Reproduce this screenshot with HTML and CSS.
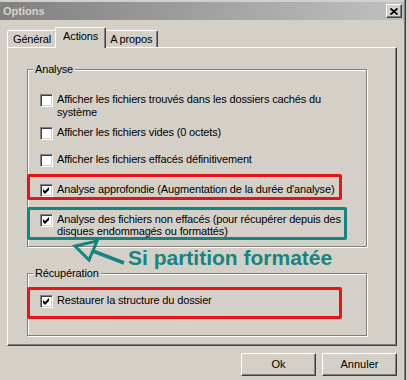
FILE: index.html
```html
<!DOCTYPE html>
<html lang="fr">
<head>
    <meta charset="UTF-8">
    <title>Options</title>
    <link rel="stylesheet" href="styles.css">
</head>
<body>
    <div class="window">
        <!-- Title bar -->
        <div class="titlebar">
            <span class="title">Options</span>
            <span class="close-btn">
                <svg width="8" height="7" viewBox="0 0 8 7"><path d="M0.5 0.5 L7.5 6.5 M7.5 0.5 L0.5 6.5" stroke="#000" stroke-width="1.8"/></svg>
            </span>
        </div>

        <div class="client">
            <!-- Tabs -->
            <div class="tabs">
                <div class="tab">Général</div>
                <div class="tab active">Actions</div>
                <div class="tab">A propos</div>
            </div>

            <div class="panel">
                <fieldset class="group group-analyse">
                    <legend>Analyse</legend>
                    <div class="option">
                        <span class="check"></span>
                        <span class="label">Afficher les fichiers trouvés dans les dossiers cachés du<br>système</span>
                    </div>
                    <div class="option">
                        <span class="check"></span>
                        <span class="label">Afficher les fichiers vides (0 octets)</span>
                    </div>
                    <div class="option spaced">
                        <span class="check"></span>
                        <span class="label">Afficher les fichiers effacés définitivement</span>
                    </div>
                    <div class="option marked marked-red">
                        <span class="check"><svg width="7" height="7" viewBox="0 0 7 7"><polygon points="0,2 2,4 6,0 6,3 2,7 0,5"/></svg></span>
                        <span class="label">Analyse approfondie (Augmentation de la durée d'analyse)</span>
                    </div>
                    <div class="option marked marked-teal">
                        <span class="check"><svg width="7" height="7" viewBox="0 0 7 7"><polygon points="0,2 2,4 6,0 6,3 2,7 0,5"/></svg></span>
                        <span class="label">Analyse des fichiers non effacés (pour récupérer depuis des<br>disques endommagés ou formattés)</span>
                    </div>
                </fieldset>

                <fieldset class="group group-recup">
                    <legend>Récupération</legend>
                    <div class="option marked marked-red">
                        <span class="check"><svg width="7" height="7" viewBox="0 0 7 7"><polygon points="0,2 2,4 6,0 6,3 2,7 0,5"/></svg></span>
                        <span class="label">Restaurer la structure du dossier</span>
                    </div>
                </fieldset>
            </div>

            <!-- Dialog buttons -->
            <div class="buttons">
                <button class="btn">Ok</button>
                <button class="btn">Annuler</button>
            </div>
        </div>

        <!-- Annotation drawn over the dialog -->
        <svg class="note-arrow" width="64" height="34" viewBox="0 0 64 34">
            <polygon points="9,11 31,6 23,25" fill="none" stroke="#17857f" stroke-width="3" stroke-linejoin="miter"/>
            <line x1="27" y1="16" x2="58" y2="28" stroke="#17857f" stroke-width="3.5"/>
        </svg>
        <span class="note-text">Si partition formatée</span>
    </div>
</body>
</html>
```

FILE: styles.css
```css
html {
    background: #d4d0c8;
}

body {
    margin: 0;
    font-family: "Liberation Sans", Arial, sans-serif;
    font-size: 11px;
    line-height: 13px;
    letter-spacing: -0.15px;
    color: #000;
}

.window {
    position: relative;
    width: 404px;
    height: 378px;
    padding-top: 2px;
    background: #d4d0c8;
    border-right: 1px solid #808080;
    box-shadow: 1px 0 0 #404040;
}

/* Title bar */
.titlebar {
    display: flex;
    align-items: center;
    justify-content: space-between;
    height: 18px;
    padding: 0 2px 0 3px;
    background: linear-gradient(to right, #808080, #c0c0c0);
}

.title {
    font-weight: bold;
    color: #d8d4cc;
    letter-spacing: 0;
}

.close-btn {
    width: 16px;
    height: 14px;
    box-sizing: border-box;
    display: flex;
    align-items: center;
    justify-content: center;
    background: #d4d0c8;
    border: 1px solid;
    border-color: #fff #404040 #404040 #fff;
    box-shadow: inset -1px -1px 0 #808080;
}

.client {
    padding: 7px 7px 0;
}

/* Tabs */
.tabs {
    display: flex;
    align-items: flex-end;
    margin-bottom: -1px;
    position: relative;
    z-index: 1;
}

.tab {
    height: 17px;
    box-sizing: border-box;
    padding: 2px 5px 1px;
    margin-bottom: 1px;
    background: #d4d0c8;
    border: 1px solid;
    border-bottom: 0;
    border-color: #fff #404040 transparent #fff;
    box-shadow: inset -1px 0 0 #808080;
    border-radius: 2px 2px 0 0;
}

.tab.active {
    height: 21px;
    margin: 0 -2px;
    padding: 2px 7px 5px;
    position: relative;
    z-index: 1;
}

.panel {
    border: 1px solid;
    border-color: #fff #404040 #404040 #fff;
    box-shadow: inset -1px -1px 0 #808080;
    padding: 15px 0 9px 19px;
}

/* Group boxes */
.group {
    margin: 0;
    padding: 0;
    width: 340px;
    box-sizing: border-box;
    border: 1px solid #808080;
    box-shadow: 1px 1px 0 #fff, inset 1px 1px 0 #fff;
}

.group legend {
    margin-left: 5px;
    padding: 0 2px;
    background: #d4d0c8;
    line-height: 13px;
}

.group-analyse {
    padding: 17px 0 6px;
}

.group-recup {
    margin-top: 20px;
    padding: 7px 0 16px;
}

/* Checkbox rows */
.option {
    display: flex;
    align-items: flex-start;
    gap: 4px;
    padding-left: 12px;
}

.option + .option {
    margin-top: 7px;
}

.option.spaced {
    margin-top: 13px;
}

.check {
    flex: none;
    width: 13px;
    height: 13px;
    margin-top: 1px;
    box-sizing: border-box;
    display: flex;
    align-items: center;
    justify-content: center;
    background: #fff;
    border: 1px solid;
    border-color: #808080 #fff #fff #808080;
    box-shadow: inset 1px 1px 0 #404040, inset -1px -1px 0 #d4d0c8;
}

.option.marked {
    box-sizing: border-box;
    margin-left: -1px;
    padding-left: 10px;
    border: 3px solid;
    border-radius: 2px;
}

.option.marked-red {
    width: 315px;
    padding-top: 6px;
    border-color: #e3151a;
}

.option.marked-teal {
    width: 320px;
    padding-top: 3px;
    line-height: 12px;
    border-color: #17857f;
}

.group-recup .option.marked-red {
    padding-top: 4px;
    padding-bottom: 8px;
}

/* Buttons */
.buttons {
    display: flex;
    justify-content: flex-end;
    gap: 6px;
    margin-top: 7px;
}

.btn {
    width: 75px;
    height: 23px;
    padding: 0;
    font: inherit;
    color: #000;
    background: #d4d0c8;
    border: 1px solid;
    border-color: #fff #404040 #404040 #fff;
    box-shadow: inset -1px -1px 0 #808080;
}

/* Annotation */
.note-arrow {
    position: absolute;
    left: 66px;
    top: 235px;
}

.note-text {
    position: absolute;
    left: 128px;
    top: 247px;
    font-size: 21px;
    line-height: 21px;
    font-weight: bold;
    letter-spacing: 0;
    color: #17857f;
    white-space: nowrap;
}
```
